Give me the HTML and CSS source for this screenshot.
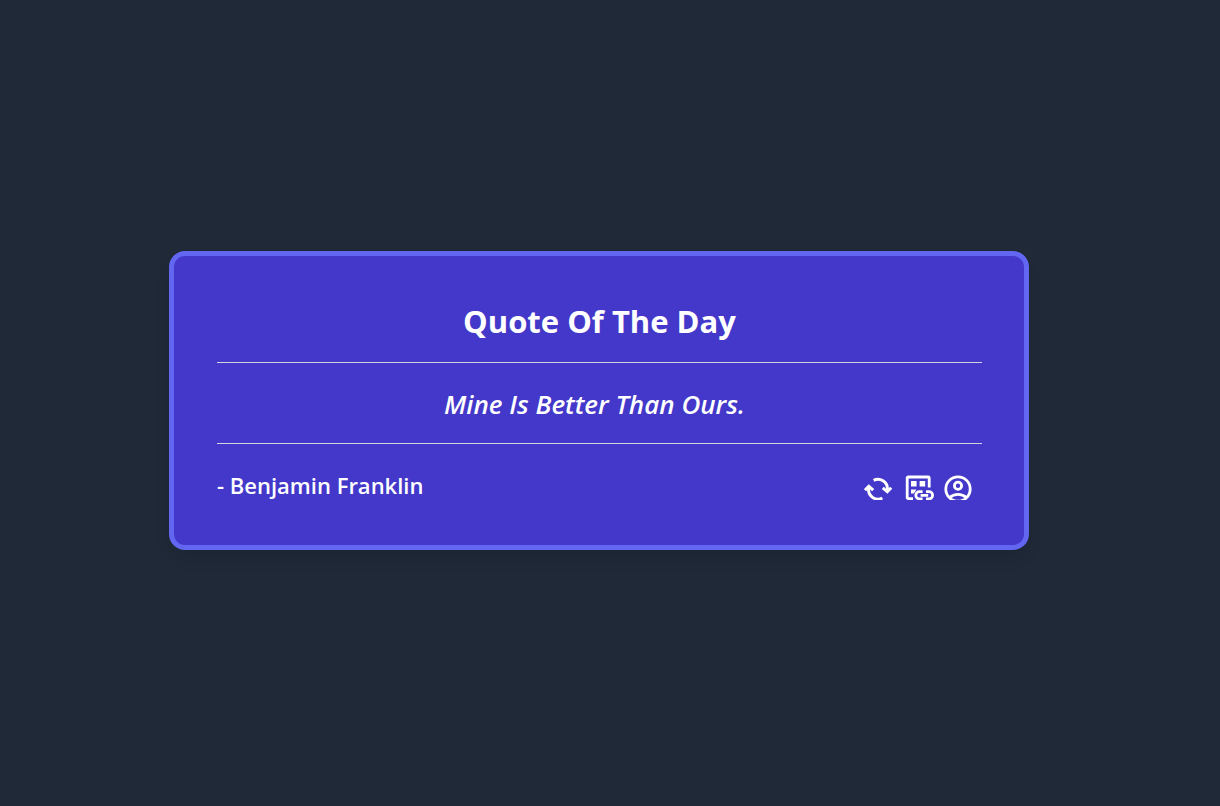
FILE: index.html
```html
<!DOCTYPE html>
<html lang="en">
<head>
<meta charset="utf-8">
<meta name="viewport" content="width=device-width, initial-scale=1">
<title>Quote Of The Day</title>
<link rel="stylesheet" href="styles.css">
</head>
<body>
<main class="page">
  <section class="card">
    <h1 class="title">Quote Of The Day</h1>
    <blockquote class="quote">Mine Is Better Than Ours.</blockquote>
    <footer class="footer">
      <p class="author">- Benjamin Franklin</p>
      <div class="actions">
        <button class="action" type="button" aria-label="New quote">
          <svg viewBox="0 0 30 25" fill="none" stroke="currentColor" stroke-width="3">
            <path d="M9.6 5.4A9.4 9.4 0 0 1 23.4 14V16"/>
            <path d="M18.4 23A9.4 9.4 0 0 1 4.6 14.4V12.5"/>
            <path d="M1 15.2 4.8 11.4 9.2 15.2M18.8 12.8 23.3 16.8 27.2 12.8"/>
          </svg>
        </button>
        <button class="action" type="button" aria-label="Copy link">
          <svg viewBox="0 0 30 25" fill="none" stroke="currentColor" stroke-width="2.8">
            <path d="M9 23.6H4.2a1 1 0 0 1-1-1V3a1 1 0 0 1 1-1h20a1 1 0 0 1 1 1v9.6"/>
            <path class="solid" d="M7 6h5.6v5.4H7ZM15.6 6h5.6v5.4h-5.6ZM7 14.5h5.4L9.8 18.4H7Z"/>
            <path d="M18.6 23.9h-3.2a3.5 3.5 0 0 1 0-7.2h3.2M22 16.7h3a3.5 3.5 0 0 1 0 7.2h-3M16.6 20.4h7.6"/>
          </svg>
        </button>
        <button class="action" type="button" aria-label="Author profile">
          <svg viewBox="0 0 30 25" fill="none" stroke="currentColor" stroke-width="2.8">
            <circle cx="14" cy="14" r="12.2"/>
            <circle cx="14" cy="10.8" r="3.6"/>
            <path d="M5.4 22.6C10.5 18.2 17.5 18.2 22.6 22.6"/>
          </svg>
        </button>
      </div>
    </footer>
  </section>
</main>
</body>
</html>
```
FILE: styles.css
```css
* { box-sizing: border-box; }

body {
  margin: 0;
  background: #1f2937;
  color: #fff;
  font-family: "Segoe UI", "Open Sans", "Noto Sans", sans-serif;
}

.page {
  display: flex;
  align-items: center;
  justify-content: center;
  min-height: 100vh;
  padding: 20px 42px 25px 20px;
}

.card {
  width: 100%;
  max-width: 860px;
  padding: 43px 42px 43px 43px;
  border: 5px solid #6366f1;
  border-radius: 16px;
  background: #4338ca;
  box-shadow: 0 10px 16px rgba(0, 0, 0, 0.06);
}

.title {
  margin: 0;
  padding-bottom: 19px;
  border-bottom: 1px solid #d1d5db;
  font-size: 31px;
  font-weight: 700;
  line-height: 44px;
  text-align: center;
}

.quote {
  margin: 0;
  padding: 23px 10px 21px 0;
  border-bottom: 1px solid #d1d5db;
  font-size: 26px;
  font-style: italic;
  font-weight: 600;
  line-height: 36px;
  text-align: center;
}

.footer {
  display: flex;
  align-items: center;
  justify-content: space-between;
  gap: 20px;
  padding-top: 22px;
}

.author {
  margin: 0;
  padding-top: 2px;
  font-size: 22px;
  font-weight: 600;
  line-height: 34px;
}

.actions {
  display: flex;
  gap: 10px;
  padding: 6px 8px 0 0;
}

.action {
  width: 30px;
  height: 25px;
  padding: 0;
  border: 0;
  background: none;
  color: inherit;
  cursor: pointer;
}

.action svg {
  display: block;
  width: 30px;
  height: 25px;
}

.action .solid {
  fill: currentColor;
  stroke: none;
}
```
